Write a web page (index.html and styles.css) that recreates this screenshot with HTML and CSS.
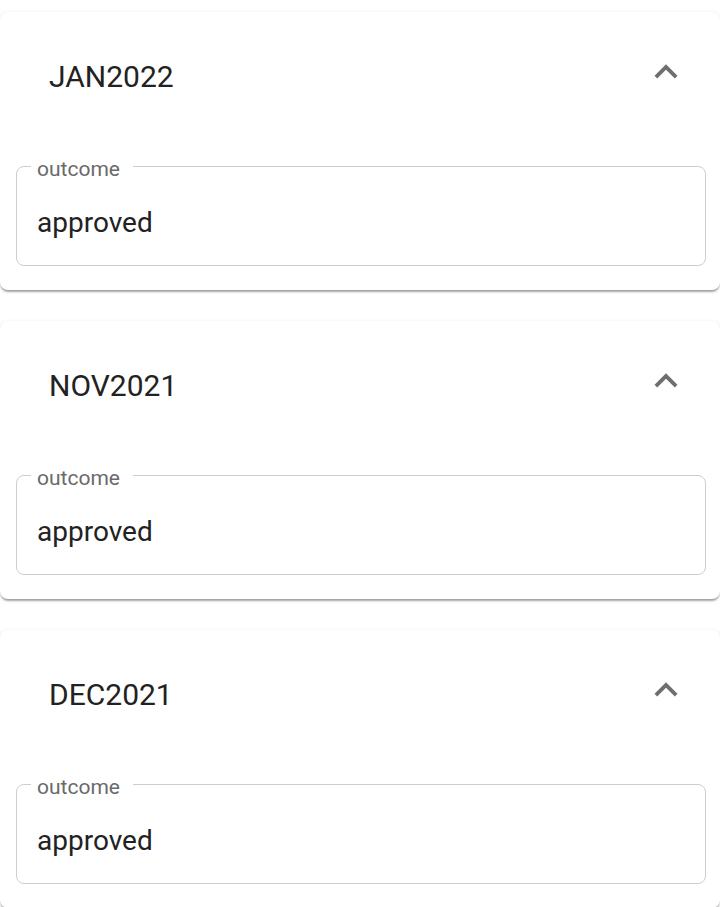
FILE: index.html
```html
<!DOCTYPE html>
<html lang="en">
<head>
    <meta charset="UTF-8">
    <meta name="viewport" content="width=device-width, initial-scale=1.0">
    <title>Outcomes</title>
    <link rel="stylesheet" href="styles.css">
</head>
<body>

    <div class="list">
        <div class="card">
            <div class="card-head">
                <span class="period">JAN2022</span>
                <svg class="chevron" viewBox="0 0 24 24"><path d="M12 8l-6 6 1.41 1.41L12 10.83l4.59 4.58L18 14z"/></svg>
            </div>
            <div class="card-body">
                <fieldset class="field">
                    <legend>outcome</legend>
                    <div class="value">approved</div>
                </fieldset>
            </div>
        </div>

        <div class="card">
            <div class="card-head">
                <span class="period">NOV2021</span>
                <svg class="chevron" viewBox="0 0 24 24"><path d="M12 8l-6 6 1.41 1.41L12 10.83l4.59 4.58L18 14z"/></svg>
            </div>
            <div class="card-body">
                <fieldset class="field">
                    <legend>outcome</legend>
                    <div class="value">approved</div>
                </fieldset>
            </div>
        </div>

        <div class="card">
            <div class="card-head">
                <span class="period">DEC2021</span>
                <svg class="chevron" viewBox="0 0 24 24"><path d="M12 8l-6 6 1.41 1.41L12 10.83l4.59 4.58L18 14z"/></svg>
            </div>
            <div class="card-body">
                <fieldset class="field">
                    <legend>outcome</legend>
                    <div class="value">approved</div>
                </fieldset>
            </div>
        </div>
    </div>

</body>
</html>
```

FILE: styles.css
```css
body { margin: 0; background: #fff; font-family: Roboto, "Liberation Sans", sans-serif; color: #222; }
.list { display: flex; flex-direction: column; gap: 31px; padding-top: 12px; }
.card { height: 278px; background: #fff; border-radius: 8px; box-shadow: 0 3px 2px -1px rgba(0,0,0,.28), 0 1px 2px 0 rgba(0,0,0,.12), 0 1px 5px 0 rgba(0,0,0,.08); box-sizing: border-box; }
.card-head { height: 128px; display: flex; align-items: center; justify-content: space-between; padding: 0 31px 0 49px; }
.period { font-size: 30px; color: #222; }
.chevron { width: 46px; height: 46px; fill: #6f6f6f; margin-bottom: 8px; }
.card-body { padding: 16px 14px 0 16px; }
.field { margin: 0; height: 110px; box-sizing: border-box; border: 1.5px solid #cdcdcd; border-radius: 8px; padding: 0 20px 0 14px; }
.field legend { font-size: 21px; color: #6a6a6a; padding: 6px 13px 0 6px; line-height: 14px; }
.value { font-size: 28px; padding: 30px 0 0 6px; color: #222; }
```
